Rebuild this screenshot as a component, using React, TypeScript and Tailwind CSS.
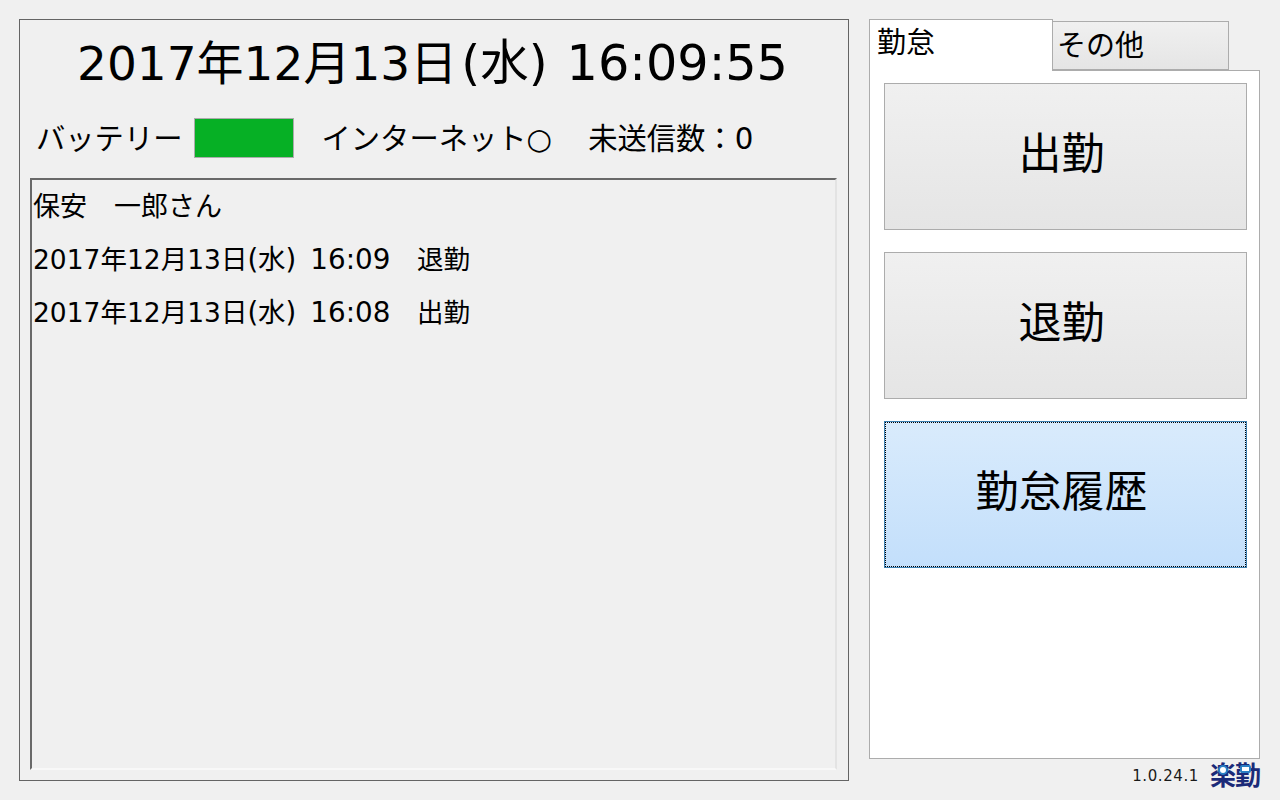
const font = "font-['DejaVu_Sans','Noto_Sans_CJK_JP',sans-serif]";

function ActionButton({ label, active }: { label: string; active?: boolean }) {
  return (
    <button
      type="button"
      className={
        active
          ? "relative flex h-[147px] w-[363px] items-center justify-center border border-[#3c7fb1] bg-gradient-to-b from-[#d9ebfc] to-[#c3dffb] pr-[8px] pb-[4px] text-[43px] text-black"
          : "flex h-[147px] w-[363px] items-center justify-center border border-[#acacac] bg-gradient-to-b from-[#f0f0f0] to-[#e5e5e5] pr-[8px] pb-[5px] text-[43px] text-black"
      }
    >
      {active && (
        <span className="absolute inset-0 border border-dotted border-black" />
      )}
      {label}
    </button>
  );
}

function HistoryRow({ time, kind }: { time: string; kind: string }) {
  return (
    <div className="text-[27.5px]">
      <span className="text-[26.5px]">2017年12月13日</span>(水)
      <span className="ml-[14px] text-[27.8px]">{time}</span>
      <span className="text-[26.5px]">　{kind}</span>
    </div>
  );
}

export default function App() {
  return (
    <div className={`flex h-[800px] w-[1280px] overflow-hidden bg-[#f0f0f0] pl-[19px] pt-[19px] text-black ${font}`}>
      <div className="flex h-[762px] w-[830px] flex-col border border-[#646464]">
        <div className="mt-[13px] h-[60px] pl-[57px] text-[48.5px] leading-[60px] whitespace-nowrap">
          <span className="text-[47px]">2017年12月13日</span>
          <span className="ml-[4px]">(水)</span>
          <span className="ml-[19px] text-[49.3px]">16:09:55</span>
        </div>
        <div className="mt-[25px] flex h-[40px] items-center pl-[16px] text-[29.3px] whitespace-nowrap">
          <span className="pt-[4px]">バッテリー</span>
          <span className="ml-[12px] h-[40px] w-[100px] border border-[#acacac] bg-[#06b025]" />
          <span className="ml-[27px] pt-[4px]">インターネット○</span>
          <span className="ml-[36px] pt-[4px]">未送信数：0</span>
        </div>
        <div className="ml-[10px] mt-[20px] h-[592px] w-[807px] border-t-2 border-r-2 border-b-2 border-l-2 border-t-[#696969] border-l-[#696969] border-r-[#e3e3e3] border-b-[#f8f8f8] pl-[1px] leading-[53px] whitespace-nowrap">
          <div className="text-[27px]">保安　一郎さん</div>
          <HistoryRow time="16:09" kind="退勤" />
          <HistoryRow time="16:08" kind="出勤" />
        </div>
      </div>

      <div className="ml-[20px] w-[391px]">
        <div className="flex h-[52px] items-start">
          <div className="z-10 h-[52px] w-[184px] border border-b-0 border-[#acacac] bg-white pl-[7px] pt-[2px] text-[29px] leading-[42px]">
            勤怠
          </div>
          <div className="mt-[2px] h-[49px] w-[176px] border border-l-0 border-[#acacac] bg-gradient-to-b from-[#f0f0f0] to-[#e5e5e5] pl-[4px] pt-[2px] text-[29px] leading-[44px]">
            その他
          </div>
        </div>
        <div className="-mt-[1px] flex h-[689px] w-[391px] flex-col gap-[22px] border border-[#acacac] bg-white pl-[14px] pt-[12px]">
          <ActionButton label="出勤" />
          <ActionButton label="退勤" />
          <ActionButton label="勤怠履歴" active />
        </div>
        <div className="mt-[2px] flex items-center justify-end">
          <span className="mr-[11px] text-[15px] tracking-[0.6px] text-[#1a1a1a]">1.0.24.1</span>
          <span className="relative text-[26px] leading-[30px] font-bold tracking-[-1px] text-[#1b2a78]">
            楽勤
            <span className="absolute left-[8px] top-[4px] h-[10px] w-[10px] rounded-full border-2 border-[#2a7fc4] bg-white" />
            <span className="absolute left-[30px] top-[4px] h-[8px] w-[11px] rounded-[2px] border-2 border-[#2a7fc4] bg-white" />
          </span>
        </div>
      </div>
    </div>
  );
}
